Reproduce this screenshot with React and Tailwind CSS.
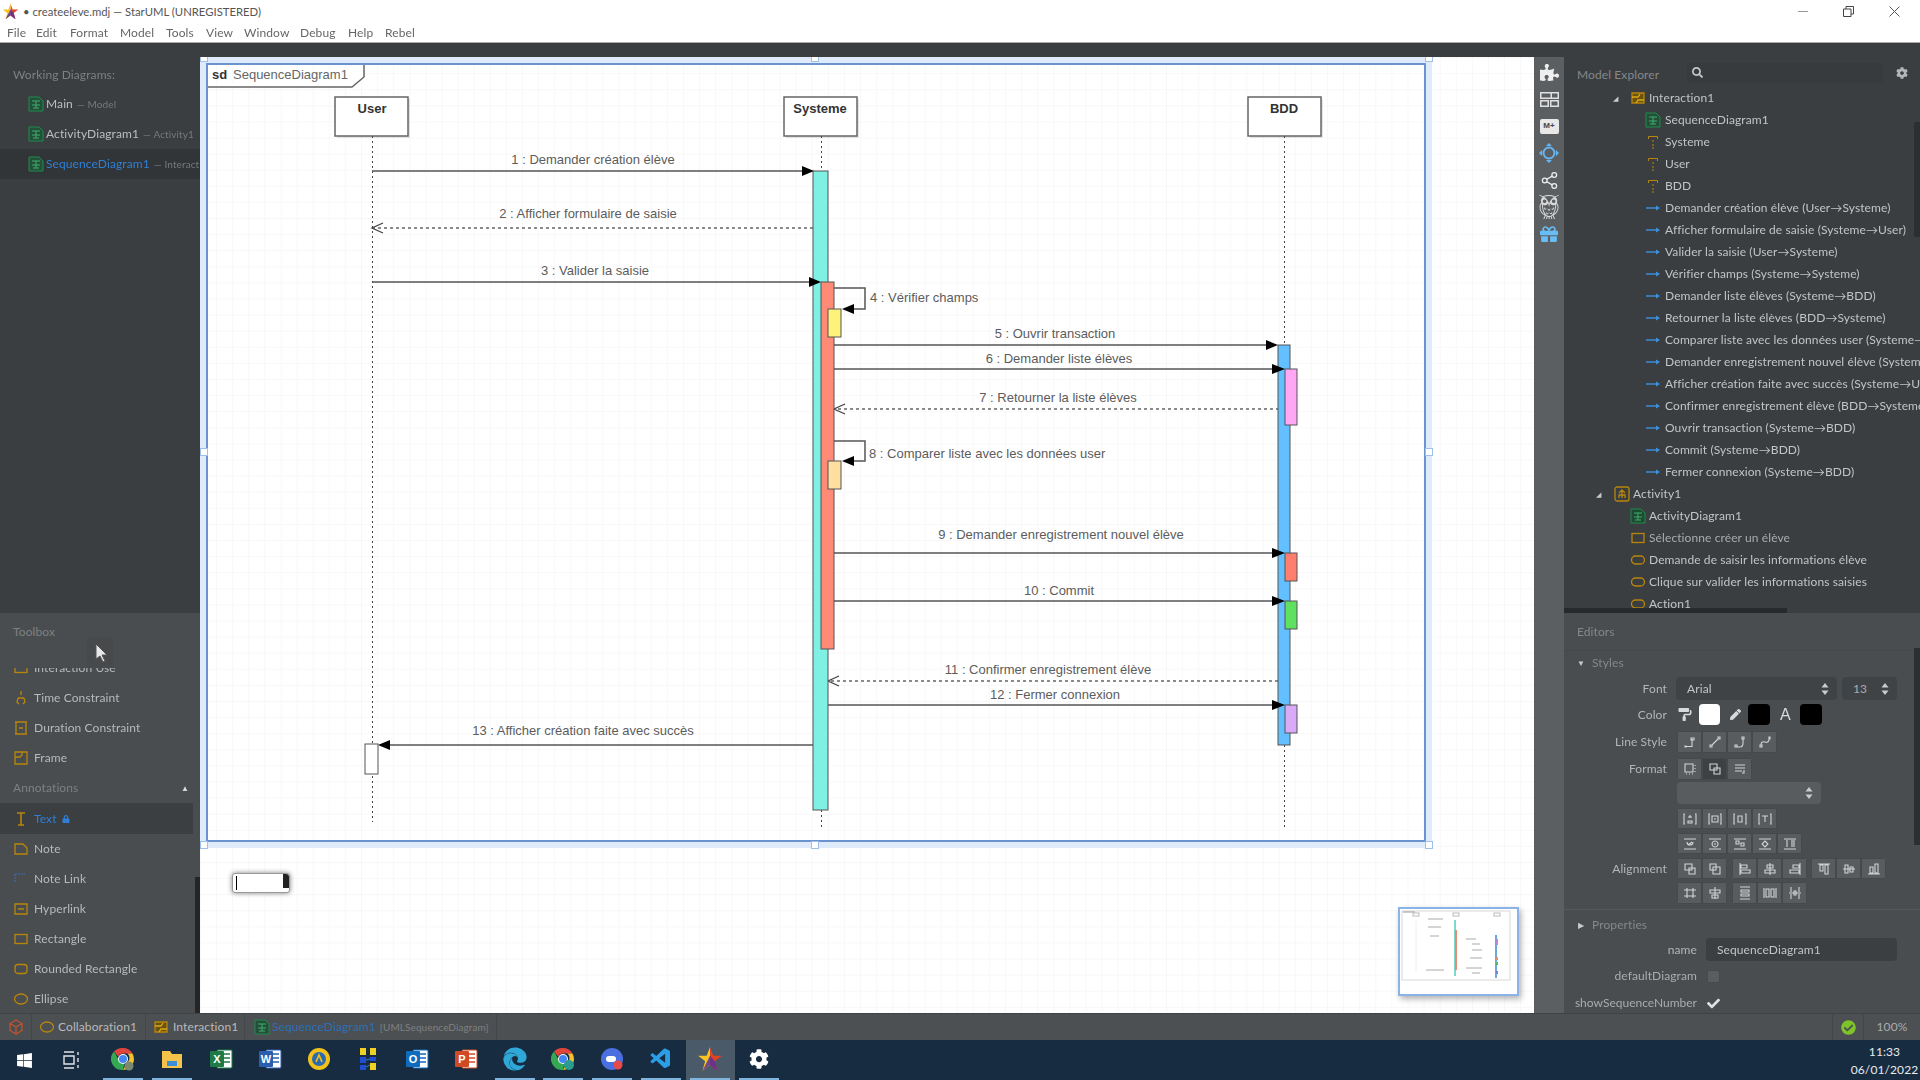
import React from "react";
import { FaWindows, FaCog, FaGift, FaPuzzlePiece, FaSearch, FaCheckCircle, FaPaintRoller, FaPen, FaLock, FaCheck, FaEdge } from "react-icons/fa";
import { GiOwl } from "react-icons/gi";
import { VscVscode } from "react-icons/vsc";
import { Share2 } from "lucide-react";

const MENU = [
  ["File", "w-[29px]"], ["Edit", "w-[34px]"], ["Format", "w-[50px]"], ["Model", "w-[46px]"], ["Tools", "w-[40px]"],
  ["View", "w-[38px]"], ["Window", "w-[56px]"], ["Debug", "w-[48px]"], ["Help", "w-[37px]"], ["Rebel", "w-[36px]"],
];

const MESSAGES = [
  "Demander création élève (User→Systeme)",
  "Afficher formulaire de saisie (Systeme→User)",
  "Valider la saisie (User→Systeme)",
  "Vérifier champs (Systeme→Systeme)",
  "Demander liste élèves (Systeme→BDD)",
  "Retourner la liste élèves (BDD→Systeme)",
  "Comparer liste avec les données user (Systeme→Systeme)",
  "Demander enregistrement nouvel élève (Systeme→BDD)",
  "Afficher création faite avec succès (Systeme→User)",
  "Confirmer enregistrement élève (BDD→Systeme)",
  "Ouvrir transaction (Systeme→BDD)",
  "Commit (Systeme→BDD)",
  "Fermer connexion (Systeme→BDD)",
];

const ORANGE = "#b8860b";

function DiagramIcon({ dim }) {
  return (
    <svg className="shrink-0" width="16" height="16" viewBox="0 0 16 16" fill="none">
      <path d="M1 1h10l4 4v10H1z" fill={dim ? "#1f4a32" : "#24503a"} stroke="#1f8a4c" />
      <path d="M4 5h8M8 5v7M4 9h8M5 12h6" stroke="#3fae6a" />
    </svg>
  );
}

function LifelineIcon() {
  return (
    <svg width="16" height="16" viewBox="0 0 16 16" fill="none" stroke={ORANGE}>
      <path d="M3.5 5V2.5h9V5" />
      <path d="M8 6v2M8 10v2M8 13v2" />
    </svg>
  );
}

function MessageIcon() {
  return (
    <svg width="16" height="16" viewBox="0 0 16 16">
      <path d="M1 8h11" stroke="#3b93e0" strokeWidth="1.4" />
      <path d="M11 5.5L15 8l-4 2.5z" fill="#3b93e0" />
    </svg>
  );
}

function ShapeIcon({ kind }) {
  return (
    <svg width="16" height="16" viewBox="0 0 16 16" fill="none" stroke={ORANGE} strokeWidth="1.3">
      {kind === "rect" && <rect x="2" y="3.5" width="12" height="9" />}
      {kind === "round" && <rect x="2" y="3.5" width="12" height="9" rx="3" />}
      {kind === "pill" && <rect x="1.5" y="4" width="13" height="8" rx="4" />}
      {kind === "ellipse" && <ellipse cx="8" cy="8" rx="6.5" ry="5" />}
      {kind === "interaction" && (
        <>
          <path d="M2 3h12v10H2z" fill="#6a5210" />
          <path d="M2 7h6l2-3M14 10H8l-2 3" stroke="#e0a818" />
        </>
      )}
      {kind === "activity" && (
        <>
          <rect x="1" y="1" width="14" height="14" rx="2" />
          <path d="M8 4v8M5 7l3-3 3 3M5 12V9h6v3" />
        </>
      )}
      {kind === "time" && <path d="M8 1v4M5 8l-1 4 2 2M11 8l1 4-2 2M5 8h6" />}
      {kind === "duration" && <path d="M2 2h12M2 14h12M3 2v12M13 2v12M6 8h4" />}
      {kind === "frame" && <path d="M2 2h12v12H2zM2 7h5l2-2V2" />}
      {kind === "note" && <path d="M2 3h8l4 4v6H2z" />}
      {kind === "hyper" && <path d="M2 3h12v10H2zM5 8h6" />}
      {kind === "T" && <path d="M4 2h8M8 2v12M5 14h6" strokeWidth="1.6" />}
    </svg>
  );
}

function Tree({ pad, tri, icon, children, dim, gap = "ml-[4px]" }) {
  return (
    <div className={"flex h-[22px] shrink-0 items-center whitespace-nowrap " + pad}>
      {tri && <span className={"text-[7px] leading-none text-[#c8cacc] " + tri}>◢</span>}
      <span className="flex w-[16px] shrink-0 justify-center">{icon}</span>
      <span className={gap + " " + (dim ? "text-[#a9acae]" : "text-[#c2c4c6]")}>{children}</span>
    </div>
  );
}

function ModelExplorer() {
  return (
    <div className="relative flex h-[570px] shrink-0 flex-col bg-[#3b3e40]">
      <div className="flex h-[44px] shrink-0 items-center pl-[13px] pt-[20px]">
        <span className="w-[110px] text-[#85888a]">Model Explorer</span>
        <div className="-mt-[5px] flex h-[20px] w-[196px] items-center rounded-[4px] bg-[#383b3d] pl-[5px]">
          <FaSearch className="text-[11px] text-[#c4c6c8]" />
        </div>
        <FaCog className="-mt-[5px] ml-[13px] text-[12px] text-[#b4b6b8]" />
      </div>
      <div className="flex flex-1 flex-col overflow-hidden pr-[5px]">
        <Tree pad="pl-[49px]" tri="w-[17px]" icon={<ShapeIcon kind="interaction" />} gap="ml-[3px]">Interaction1</Tree>
        <Tree pad="pl-[81px]" icon={<DiagramIcon />}>SequenceDiagram1</Tree>
        {["Systeme", "User", "BDD"].map((n) => (
          <Tree key={n} pad="pl-[81px]" icon={<LifelineIcon />}>{n}</Tree>
        ))}
        {MESSAGES.map((m) => (
          <Tree key={m} pad="pl-[81px]" icon={<MessageIcon />}>{m}</Tree>
        ))}
        <Tree pad="pl-[32px]" tri="w-[18px]" icon={<ShapeIcon kind="activity" />} gap="ml-[3px]">Activity1</Tree>
        <Tree pad="pl-[66px]" icon={<DiagramIcon dim />} gap="ml-[3px]">ActivityDiagram1</Tree>
        <Tree pad="pl-[66px]" icon={<ShapeIcon kind="rect" />} gap="ml-[3px]" dim>Sélectionne créer un élève</Tree>
        <Tree pad="pl-[66px]" icon={<ShapeIcon kind="pill" />} gap="ml-[3px]">Demande de saisir les informations élève</Tree>
        <Tree pad="pl-[66px]" icon={<ShapeIcon kind="pill" />} gap="ml-[3px]">Clique sur valider les informations saisies</Tree>
        <Tree pad="pl-[66px]" icon={<ShapeIcon kind="pill" />} gap="ml-[3px]">Action1</Tree>
      </div>
      <div className="absolute right-0 top-[79px] h-[115px] w-[6px] bg-[#2c2e30]" />
      <div className="absolute bottom-0 left-0 h-[5px] w-[223px] bg-[#28292b]" />
    </div>
  );
}

const GLYPHS = {
  lineA: "M2 12h1v-1h-1zM3 11.5h6V4M8 3h3v2H8z",
  lineB: "M2 12h2v-2H2zM4 10l6-6M10 2h2v2h-2z",
  lineC: "M2 12h2v-2H2zM4 12h3q3 0 3-4V4M9 2h2v2H9z",
  lineD: "M2 12h2v-2H2zM3 10q0-4 4-3t4-3M11 2h1v2h-1z",
  fmtA: "M2 2h8v8H2zM12 3v1M12 6v1M12 9v1M3 12h1M6 12h1M9 12h1",
  fmtC: "M2 3h10M2 6h10M2 9h7M11 8v3H9",
  boxA: "M2 2H1v10h1M12 2h1v10h-1M7 3v3M5 5h4M5 9h4v2H5z",
  boxB: "M2 2H1v10h1M12 2h1v10h-1M4 4h6v6H4zM6 7h2",
  boxC: "M2 2H1v10h1M12 2h1v10h-1M5 4h4v6H5z",
  boxD: "M2 2H1v10h1M12 2h1v10h-1M4 4h6M7 4v6",
  topA: "M1 2h12M1 12h12M4 5a3 3 0 1 0 6 0M5 8l4-3",
  topB: "M1 2h12M1 12h12M7 4a3 3 0 1 0 .1 0M7 6v2",
  topC: "M1 2h12M1 12h12M3 4h3v3H3zM8 6h3v3H8z",
  topD: "M1 2h12M1 12h12M7 4l3 3-3 3-3-3z",
  topE: "M1 2h12M1 12h12M4 3v7M9 3v7M11 3v7",
  frontA: "M2 2h7v6H2zM6 6h6v6H6z",
  backA: "M2 2h6v6H2zM5 5h7v7H5z",
  left: "M2 1v12M3 3h6v3H3zM3 8h9v3H3z",
  center: "M7 1v12M4 3h6v3H4zM2 8h10v3H2z",
  right: "M12 1v12M5 3h6v3H5zM2 8h9v3H2z",
  top: "M1 2h12M3 3v6h3V3zM8 3v9h3V3z",
  mid: "M1 7h12M3 3v8h3V3zM8 5v5h3V5z",
  bottom: "M1 12h12M3 5v6h3V5zM8 2v9h3V2z",
  spaceA: "M1 4h12M1 10h12M4 2v10M10 2v10",
  spaceB: "M7 1v12M2 4h10v3H2zM4 9h6v3H4z",
  evenA: "M2 1h10M2 13h10M3 4h8v2H3zM3 8h8v2H3z",
  evenB: "M1 2v10M13 2v10M3 3h3v8H3zM8 3h3v8H8z",
  evenC: "M3 1v5M11 1v5M1 7h12M3 8v5M11 8v5M6 5h2v4H6z",
};

function Btn({ g, dark }) {
  return (
    <div className={"flex h-full w-[25px] items-center justify-center border border-[#46494b] " + (dark ? "bg-[#3e4143]" : "bg-[#595c5e]")}>
      <svg width="14" height="14" viewBox="0 0 14 14" fill="none" stroke="#d2d4d5" strokeWidth="1.1">
        <path d={GLYPHS[g]} />
      </svg>
    </div>
  );
}

function Group({ items, className = "" }) {
  return (
    <div className={"flex h-full overflow-hidden rounded-[3px] " + className}>
      {items.map((g, i) => (
        <Btn key={i} g={g} />
      ))}
    </div>
  );
}

function Label({ children }) {
  return <span className="w-[103px] shrink-0 text-right text-[#b3b5b7]">{children}</span>;
}

function Spinner() {
  return (
    <svg width="8" height="12" viewBox="0 0 8 12" fill="#c9cbcc">
      <path d="M4 0l3.5 4.5h-7zM4 12L.5 7.5h7z" />
    </svg>
  );
}

function Editors() {
  return (
    <div className="relative flex min-h-0 flex-1 flex-col overflow-hidden bg-[#4a4d4f]">
      <div className="flex h-[38px] shrink-0 items-center border-b border-[#45484a] pl-[13px]">
        <span className="text-[#85888a]">Editors</span>
      </div>
      <div className="flex h-[24px] shrink-0 items-center pl-[13px]">
        <span className="w-[15px] text-[8px] text-[#c8cacc]">▼</span>
        <span className="text-[#85888a]">Styles</span>
      </div>
      <div className="mt-[2px] flex h-[23px] shrink-0 items-center">
        <Label>Font</Label>
        <div className="ml-[9px] flex h-full w-[161px] items-center justify-between rounded-[4px] bg-[#404345] pl-[11px] pr-[8px] text-[#c2c4c6]">
          Arial <Spinner />
        </div>
        <div className="ml-[5px] flex h-full w-[55px] items-center justify-between rounded-[4px] bg-[#404345] pl-[11px] pr-[8px] text-[#a9acae]">
          13 <Spinner />
        </div>
      </div>
      <div className="mt-[4px] flex h-[21px] shrink-0 items-center">
        <Label>Color</Label>
        <FaPaintRoller className="ml-[11px] w-[14px] text-[13px] text-[#d8d9da]" />
        <div className="ml-[7px] h-full w-[21px] rounded-[4px] bg-white" />
        <FaPen className="ml-[10px] w-[11px] text-[11px] text-[#d8d9da]" />
        <div className="ml-[7px] h-full w-[22px] rounded-[4px] bg-black" />
        <span className="ml-[10px] w-[13px] font-['Liberation_Sans',sans-serif] text-[16px] leading-none text-[#d8d9da]">A</span>
        <div className="ml-[7px] h-full w-[22px] rounded-[4px] bg-black" />
      </div>
      <div className="mt-[6px] flex h-[22px] shrink-0 items-center">
        <Label>Line Style</Label>
        <Group className="ml-[10px]" items={["lineA", "lineB", "lineC", "lineD"]} />
      </div>
      <div className="mt-[5px] flex h-[22px] shrink-0 items-center">
        <Label>Format</Label>
        <div className="ml-[10px] flex h-full overflow-hidden rounded-[3px]">
          <Btn g="fmtA" />
          <Btn g="frontA" dark />
          <Btn g="fmtC" />
        </div>
      </div>
      <div className="ml-[113px] mt-[2px] flex h-[22px] w-[144px] shrink-0 items-center justify-end rounded-[4px] bg-[#595c5e] pr-[8px]">
        <Spinner />
      </div>
      <div className="ml-[113px] mt-[4px] h-[21px] shrink-0">
        <Group items={["boxA", "boxB", "boxC", "boxD"]} />
      </div>
      <div className="ml-[113px] mt-[4px] h-[21px] shrink-0">
        <Group items={["topA", "topB", "topC", "topD", "topE"]} />
      </div>
      <div className="mt-[4px] flex h-[21px] shrink-0 items-center">
        <Label>Alignment</Label>
        <Group className="ml-[10px]" items={["frontA", "backA"]} />
        <Group className="ml-[5px]" items={["left", "center", "right"]} />
        <Group className="ml-[4px]" items={["top", "mid", "bottom"]} />
      </div>
      <div className="mt-[3px] flex h-[22px] shrink-0 items-center pl-[113px]">
        <Group items={["spaceA", "spaceB"]} />
        <Group className="ml-[5px]" items={["evenA", "evenB", "evenC"]} />
      </div>
      <div className="mt-[5px] h-0 shrink-0 border-t border-[#55585a]" />
      <div className="mt-[3px] flex h-[24px] shrink-0 items-center pl-[14px]">
        <span className="w-[14px] text-[8px] text-[#c8cacc]">▶</span>
        <span className="text-[#85888a]">Properties</span>
      </div>
      <div className="mt-[1px] flex h-[23px] shrink-0 items-center">
        <span className="w-[133px] text-right text-[#b3b5b7]">name</span>
        <div className="ml-[9px] flex h-full w-[191px] items-center rounded-[4px] bg-[#3c3f41] pl-[11px] text-[#c2c4c6]">SequenceDiagram1</div>
      </div>
      <div className="mt-[5px] flex h-[20px] shrink-0 items-center">
        <span className="w-[133px] text-right text-[#a9acae]">defaultDiagram</span>
        <div className="ml-[10px] h-[13px] w-[13px] rounded-[2px] border border-[#46494b] bg-[#5a5d5f]" />
      </div>
      <div className="mt-[7px] flex h-[20px] shrink-0 items-center">
        <span className="w-[133px] whitespace-nowrap text-right tracking-normal text-[#a9acae]">showSequenceNumber</span>
        <FaCheck className="ml-[10px] text-[13px] text-[#e0e1e2]" />
      </div>
      <div className="absolute right-0 top-[35px] h-[197px] w-[6px] bg-[#2c2e30]" />
    </div>
  );
}

function LeftPanel() {
  const tools = [
    ["Time Constraint", "time"], ["Duration Constraint", "duration"], ["Frame", "frame"],
  ];
  const notes = [
    ["Note", "note"], ["Note Link", null], ["Hyperlink", "hyper"], ["Rectangle", "rect"], ["Rounded Rectangle", "round"], ["Ellipse", "ellipse"],
  ];
  const Item = ({ label, kind }) => (
    <div className="flex h-[30.1px] shrink-0 items-center pl-[13px] text-[#b7b9bb]">
      <span className="w-[21px]">
        {kind ? (
          <ShapeIcon kind={kind} />
        ) : (
          <svg width="16" height="16" viewBox="0 0 16 16" fill="none" stroke="#3f6fb8"><path d="M2 3h10M2 3v9" strokeDasharray="2 1" /></svg>
        )}
      </span>
      {label}
    </div>
  );
  return (
    <div className="flex w-[200px] shrink-0 flex-col">
      <div className="flex h-[570px] shrink-0 flex-col bg-[#3b3e40]">
        <div className="flex h-[46px] shrink-0 items-center pl-[13px] pt-[18px] text-[#7d8082]">Working Diagrams:</div>
        {[
          ["Main", "— Model", 0],
          ["ActivityDiagram1", "— Activity1", 0],
          ["SequenceDiagram1", "— Interaction1", 1],
        ].map(([name, sub, sel]) => (
          <div key={name} className={"flex h-[30px] shrink-0 items-center overflow-hidden whitespace-nowrap pl-[28px] " + (sel ? "bg-[#323537]" : "")}>
            <DiagramIcon />
            <span className={"ml-[2px] shrink-0 " + (sel ? "text-[#2f7fd6]" : "text-[#bcbec0]")}>{name}</span>
            <span className="ml-[4px] shrink-0 text-[10px] text-[#76797b]">{sub}</span>
          </div>
        ))}
      </div>
      <div className="relative flex min-h-0 flex-1 flex-col bg-[#4a4d4f]">
        <div className="flex h-[55px] shrink-0 items-center border-b border-[#484b4d] pl-[13px] pb-[17px] text-[#7d8082]">Toolbox</div>
        <div className="flex min-h-0 flex-1 flex-col overflow-hidden">
          <div className="-mt-[15px]">
            <Item label="Interaction Use" kind="rect" />
            {tools.map(([l, k]) => <Item key={l} label={l} kind={k} />)}
            <div className="flex h-[30.1px] items-center justify-between pl-[13px] pr-[11px] text-[#7d8082]">
              Annotations <span className="text-[8px] text-[#d8d9da]">▲</span>
            </div>
            <div className="flex h-[30.1px] w-[193px] items-center bg-[#3c3f41] pl-[13px] text-[#2f7fd6]">
              <span className="w-[21px]"><ShapeIcon kind="T" /></span>
              Text <FaLock className="ml-[5px] text-[8px]" />
            </div>
            {notes.map(([l, k]) => <Item key={l} label={l} kind={k} />)}
          </div>
        </div>
        <div className="absolute bottom-0 right-0 h-[136px] w-[5px] bg-[#242527]" />
        <div className="absolute left-[87px] top-[24px] h-[30px] w-[26px] bg-[#47494b]">
          <svg width="26" height="30" viewBox="0 0 26 30">
            <path d="M9 7v15l4-3 3 6 2-1-3-6h5z" fill="#e8e8e8" stroke="#555" />
          </svg>
        </div>
      </div>
    </div>
  );
}

// sequence diagram drawing, coordinates are screen pixels (viewBox starts at canvas origin)
const BARS = [
  [813, 171, 15, 639, "#7ff0e4"], [821, 282, 13, 367, "#ff8a75"], [828, 309, 13, 28, "#fff27a"], [828, 461, 13, 28, "#ffdfa0"],
  [1278, 345, 12, 400, "#63bfff"], [1285, 369, 12, 56, "#ffa6f5"], [1285, 553, 12, 28, "#ff7f6e"], [1285, 601, 12, 28, "#5fe060"],
  [1285, 705, 12, 28, "#d8aaf8"], [365, 744, 13, 30, "#ffffff"],
];
const SOLID = [[372, 802, 171], [372, 809, 282], [834, 1266, 345], [834, 1272, 369], [834, 1272, 553], [834, 1272, 601], [828, 1272, 705]];
const DASHED = [[813, 372, 228], [1285, 834, 409], [1278, 828, 681]];
const LABELS = [
  ["1 : Demander création élève", 593, 164], ["2 : Afficher formulaire de saisie", 588, 218], ["3 : Valider la saisie", 595, 275],
  ["5 : Ouvrir transaction", 1055, 338], ["6 : Demander liste élèves", 1059, 362.5], ["7 : Retourner la liste élèves", 1058, 401.5],
  ["9 : Demander enregistrement nouvel élève", 1061, 538.5], ["10 : Commit", 1059, 594.5], ["11 : Confirmer enregistrement élève", 1048, 673.5],
  ["12 : Fermer connexion", 1055, 698.5], ["13 : Afficher création faite avec succès", 583, 734.5],
];
const HANDLES = [[204, 58], [815, 58], [1429, 58], [204, 452], [1429, 452], [204, 845], [815, 845], [1429, 845]];

function Diagram() {
  return (
    <svg className="absolute inset-0 tracking-normal" width="1334" height="956" viewBox="200 57 1334 956" fontFamily="'Liberation Sans', Arial, sans-serif" fontSize="13">
      <defs>
        <pattern id="grid" x="200" y="57" width="16.1" height="16.1" patternUnits="userSpaceOnUse">
          <path d="M16.1 0H0V16.1" fill="none" stroke="#f1f1f1" />
        </pattern>
      </defs>
      <rect x="200" y="57" width="1334" height="956" fill="#fff" />
      <rect x="200" y="57" width="1334" height="956" fill="url(#grid)" />
      <rect x="203.5" y="60.5" width="1225" height="784" fill="none" stroke="#dfeafa" strokeWidth="7" />
      <rect x="207" y="64" width="1218" height="777" fill="none" stroke="#6b93cf" strokeWidth="2" />
      {HANDLES.map(([x, y]) => (
        <rect key={x + "-" + y} x={x - 3.5} y={y - 3.5} width="7" height="7" fill="#fff" stroke="#9fc0ea" />
      ))}
      <path d="M208 87H352L364 77V65" fill="#fff" stroke="#666" strokeWidth="1.5" />
      <text x="212" y="79" fontWeight="700" fill="#333">sd</text>
      <text x="233" y="79" fill="#666">SequenceDiagram1</text>

      {[[335, "User", 372], [784, "Systeme", 820], [1248, "BDD", 1284]].map(([x, name, cx]) => (
        <g key={name}>
          <rect x={x + 2} y={99} width="73" height="39" fill="#000" opacity="0.1" />
          <rect x={x} y={97} width="73" height="39" fill="#fff" stroke="#666" strokeWidth="1.5" />
          <text x={cx} y={113} textAnchor="middle" fontWeight="700" fontSize="13" fill="#333">{name}</text>
        </g>
      ))}
      <g stroke="#444" strokeDasharray="2 3" fill="none">
        <path d="M372.5 136V822" />
        <path d="M821.5 136V171M821.5 810V830" />
        <path d="M1284.5 136V345M1284.5 745V830" />
      </g>

      {SOLID.map(([a, b, y]) => (
        <path key={a + "-" + y} d={`M${a} ${y}H${b}`} stroke="#555" strokeWidth="1.6" />
      ))}
      <path d="M834 288H865V309H848M834 441H865V461H848" fill="none" stroke="#555" strokeWidth="1.5" />
      <path d="M813 745H390" stroke="#555" strokeWidth="1.6" />
      {DASHED.map(([a, b, y]) => (
        <path key={y} d={`M${a} ${y}H${b}`} stroke="#666" strokeWidth="1.5" strokeDasharray="3 3" />
      ))}
      {DASHED.map(([, b, y]) => (
        <path key={y} d={`M${b + 11} ${y - 5}L${b} ${y}L${b + 11} ${y + 5}`} fill="none" stroke="#444" strokeWidth="1.3" />
      ))}

      {BARS.map(([x, y, w, h, c]) => (
        <rect key={x + "-" + y} x={x} y={y} width={w} height={h} fill={c} stroke="#555" strokeWidth="1" />
      ))}

      <g fill="#000">
        <path d="M802 166L814 171L802 176z" />
        <path d="M809 277L821 282L809 287z" />
        <path d="M1266 340L1278 345L1266 350z" />
        <path d="M1272 364L1285 369L1272 374z" />
        <path d="M1272 548L1285 553L1272 558z" />
        <path d="M1272 596L1285 601L1272 606z" />
        <path d="M1272 700L1285 705L1272 710z" />
        <path d="M854 304L842 309L854 314z" />
        <path d="M854 456L842 461L854 466z" />
        <path d="M390 740L378 745L390 750z" />
      </g>

      <g fill="#5c5c5c" textAnchor="middle">
        {LABELS.map(([t, x, y]) => (
          <text key={t} x={x} y={y}>{t}</text>
        ))}
      </g>
      <g fill="#5c5c5c">
        <text x="870" y="301.500">4 : Vérifier champs</text>
        <text x="869" y="458">8 : Comparer liste avec les données user</text>
      </g>
    </svg>
  );
}

function Minimap() {
  return (
    <div className="absolute left-[1198px] top-[850px] h-[89px] w-[121px] border-2 border-[#8ab4e8] bg-white shadow-[2px_3px_6px_rgba(0,0,0,0.3)]">
      <svg width="117" height="85" viewBox="0 0 117 85">
        <rect x="2" y="2" width="108" height="69" fill="none" stroke="#d8d8d8" />
        <path d="M3 3h12" stroke="#999" />
        <rect x="13" y="4" width="6" height="3" fill="#fff" stroke="#bbb" />
        <rect x="53" y="4" width="6" height="3" fill="#fff" stroke="#bbb" />
        <rect x="94" y="4" width="6" height="3" fill="#fff" stroke="#bbb" />
        <g stroke="#aaa">
          <path d="M28 10h15M28 18h13M30 27h9M66 30h10M72 35h8M72 41h10M66 59h16M72 64h8M70 49h12M26 61h18" strokeWidth="1" />
          <path d="M16 12v50" stroke="#eee" />
        </g>
        <rect x="54" y="11" width="2" height="56" fill="#7fd8cc" />
        <rect x="55" y="21" width="2" height="40" fill="#e88a75" />
        <rect x="95" y="26" width="2" height="43" fill="#6aa8e0" />
        <rect x="96" y="30" width="2" height="6" fill="#b08ad8" />
        <rect x="96" y="48" width="2" height="3" fill="#e88a75" />
        <rect x="96" y="53" width="2" height="3" fill="#50c060" />
        <rect x="96" y="62" width="2" height="3" fill="#8a7ad8" />
      </svg>
    </div>
  );
}

function ToolCell({ children }) {
  return <div className="flex h-[27px] w-full shrink-0 items-center justify-center">{children}</div>;
}

function SideTools() {
  return (
    <div className="flex w-[30px] shrink-0 flex-col items-center bg-[#5c5f61] pt-[1.5px] text-[#eeeeee]">
      <ToolCell><FaPuzzlePiece className="h-[19px] w-[19px]" /></ToolCell>
      <ToolCell>
        <svg width="19" height="15" viewBox="0 0 19 15" fill="#e0e0e0"><path d="M0 0h19v7H0zM0 8h9v7H0zM10 8h9v7h-9z" /><path d="M1.500 1.500h9v4h-9zM12 1.500h5.500v4H12zM1.500 9.500h6v4h-6zM11.500 9.500h6v4h-6z" fill="#5c5f61" /></svg>
      </ToolCell>
      <ToolCell>
        <div className="flex h-[15px] w-[19px] items-center justify-center rounded-[2px] bg-[#e8e8e8] font-['Liberation_Sans',sans-serif] text-[8px] font-bold leading-none text-[#444]">M+</div>
      </ToolCell>
      <ToolCell>
        <svg width="20" height="20" viewBox="0 0 20 20" fill="none" stroke="#67b5f0" strokeWidth="2"><circle cx="10" cy="10" r="5.500" /><path d="M10 0l3 3h-6zM10 20l3-3h-6zM0 10l3-3v6zM20 10l-3-3v6z" fill="#67b5f0" stroke="none" /></svg>
      </ToolCell>
      <ToolCell><Share2 size={19} strokeWidth={1.6} /></ToolCell>
      <ToolCell><GiOwl className="h-[26px] w-[26px] text-[#d8d8d8]" /></ToolCell>
      <ToolCell><FaGift className="h-[18px] w-[18px] text-[#69bdf5]" /></ToolCell>
    </div>
  );
}

function Chrome({ ring }) {
  return (
    <svg width="24" height="24" viewBox="0 0 24 24">
      <path d="M12 1a11 11 0 0 1 9.500 5.500H12a5.500 5.500 0 0 0-5 3L3 4.500A11 11 0 0 1 12 1z" fill="#e0443a" />
      <path d="M21.500 6.500A11 11 0 0 1 12 23l4.500-8a5.500 5.500 0 0 0 0-8.500z" fill="#f5c02e" />
      <path d="M3 4.500l4.500 8a5.500 5.500 0 0 0 6 4L12 23A11 11 0 0 1 3 4.500z" fill="#35a853" />
      <circle cx="12" cy="12" r="5" fill="#fff" />
      <circle cx="12" cy="12" r="4" fill="#4285f4" />
      {ring && <circle cx="18" cy="18" r="5" fill="#2a9d8f" />}
      {!ring && <circle cx="18" cy="19" r="4.500" fill="#7a8a70" />}
    </svg>
  );
}

function Sheet({ bg, letter }) {
  return (
    <svg width="24" height="24" viewBox="0 0 24 24">
      <rect x="8" y="3" width="15" height="18" rx="1" fill="#fff" stroke={bg} />
      <path d="M14 7h7M14 11h7M14 15h7" stroke={bg} strokeWidth="1.5" />
      <rect x="1" y="4" width="14" height="16" rx="1" fill={bg} />
      <text x="8" y="16" textAnchor="middle" fontSize="11" fontWeight="700" fill="#fff" fontFamily="'Liberation Sans', sans-serif">{letter}</text>
    </svg>
  );
}

function Star({ size }) {
  return (
    <svg width={size} height={size} viewBox="0 0 24 24">
      <path d="M12 1l3 8h8l-6.500 5 2.500 9-7-5.500z" fill="#e0451f" />
      <path d="M12 1L9 9H1l6.500 5L5 23l7-5.500z" fill="#f7c51e" />
      <path d="M12 9l4.500 5 2.500 9-7-5.500L5 23z" fill="#5a2f9e" opacity="0.85" />
    </svg>
  );
}

const ICONS = [
  [<Chrome key="c" />, true],
  [
    <svg key="f" width="24" height="24" viewBox="0 0 24 24">
      <path d="M2 4h8l2 3h10v14H2z" fill="#f5c24a" />
      <path d="M7 14h10v5H7z" fill="#3b8ed8" />
    </svg>,
    true,
  ],
  [<Sheet key="x" bg="#1f7a45" letter="X" />, false],
  [<Sheet key="w" bg="#2a5fb0" letter="W" />, false],
  [
    <svg key="n" width="24" height="24" viewBox="0 0 24 24">
      <circle cx="12" cy="12" r="11" fill="#f2c21a" />
      <circle cx="12" cy="12" r="7" fill="#2c6ab0" />
      <path d="M9 15l3-7 3 7" stroke="#f2c21a" strokeWidth="1.6" fill="none" />
    </svg>,
    false,
  ],
  [
    <svg key="g" width="24" height="24" viewBox="0 0 24 24">
      <path d="M4 1h6v7H4zM14 1h6v7h-6zM14 16h6v7h-6z" fill="#f0d020" />
      <path d="M4 10h6v6H4zM4 18h6v5H4zM14 10h6v4h-6z" fill="#1f4fd0" />
      <path d="M10 13l4-1M10 20l4-2" stroke="#2a80d0" />
    </svg>,
    false,
  ],
  [<Sheet key="o" bg="#0f6cbd" letter="O" />, false],
  [<Sheet key="p" bg="#d04a25" letter="P" />, false],
  [<FaEdge key="e" className="h-[24px] w-[24px] text-[#2fa8d8]" />, true],
  [<Chrome key="c2" ring />, true],
  [
    <svg key="d" width="24" height="24" viewBox="0 0 24 24">
      <circle cx="12" cy="12" r="11" fill="#4a6fe0" />
      <rect x="6" y="9" width="10" height="6" rx="3" fill="#fff" />
      <circle cx="18" cy="18" r="4.500" fill="#e84a4a" />
    </svg>,
    true,
  ],
  [<VscVscode key="v" className="h-[24px] w-[24px] text-[#2a9fe8]" />, true],
  [<Star key="s" size={26} />, true, true],
  [<FaCog key="g2" className="h-[20px] w-[20px] text-white" />, true],
];

function Taskbar() {
  return (
    <div className="flex h-[40px] shrink-0 items-stretch bg-[#182c41] text-white">
      <div className="flex w-[48px] items-center justify-center">
        <FaWindows className="h-[17px] w-[17px]" />
      </div>
      <div className="mr-[3px] flex w-[48px] items-center justify-center">
        <svg width="18" height="18" viewBox="0 0 18 18" fill="none" stroke="#dfe3e6" strokeWidth="1.4">
          <path d="M1 1h10M1 17h10M1 5h10v8H1zM15 1v3M15 7v4M15 14v3" />
        </svg>
      </div>
      {ICONS.map(([icon, running, active], i) => (
        <div key={i} className={"flex w-[48.9px] justify-center " + (active ? "bg-[#4a5a68]" : "")}>
          <div className={"flex h-full w-[40px] items-center justify-center border-b-2 " + (running ? "border-[#7fb4de]" : "border-transparent")}>
            {icon}
          </div>
        </div>
      ))}
      <div className="ml-auto flex w-[64px] flex-col items-center justify-center gap-[3px] pr-[7px] text-[12px] leading-[15px] text-[#e8ebee]">
        <span>11:33</span>
        <span className="whitespace-nowrap">06/01/2022</span>
      </div>
    </div>
  );
}

function StatusBar() {
  return (
    <div className="flex h-[27px] shrink-0 items-center border-t border-[#404345] bg-[#4d5052] text-[#b7b9bb]">
      <div className="flex h-full w-[32px] items-center justify-center border-r border-[#44474a]">
        <svg width="16" height="16" viewBox="0 0 16 16" fill="none" stroke="#c0532f" strokeWidth="1.3"><path d="M8 1l6 3.500v7L8 15l-6-3.500v-7zM2 4.500L8 8l6-3.500M8 8v7" /></svg>
      </div>
      <div className="flex h-full w-[114px] items-center border-r border-[#44474a] pl-[7px]">
        <span className="w-[19px]"><ShapeIcon kind="ellipse" /></span>Collaboration1
      </div>
      <div className="flex h-full w-[99px] items-center border-r border-[#44474a] pl-[7px]">
        <span className="w-[20px]"><ShapeIcon kind="interaction" /></span>Interaction1
      </div>
      <div className="flex h-full w-[252px] items-center overflow-hidden whitespace-nowrap border-r border-[#44474a] pl-[9px]">
        <span className="w-[18px]"><DiagramIcon /></span>
        <span className="text-[#2a6fb8]">SequenceDiagram1</span>
        <span className="ml-[4px] text-[10px] text-[#7d8082]">[UMLSequenceDiagram]</span>
      </div>
      <div className="ml-auto flex h-full w-[32px] items-center justify-center border-x border-[#44474a]">
        <FaCheckCircle className="text-[15px] text-[#7ec32a]" />
      </div>
      <div className="flex w-[56px] justify-center text-[#a9acae]">100%</div>
    </div>
  );
}

export default function App() {
  return (
    <div className="flex h-[1080px] w-[1920px] flex-col overflow-hidden font-['Lato','Noto_Sans',sans-serif] text-[12px] leading-none tracking-[0.1px] blur-[0.7px]">
      <div className="flex h-[43px] shrink-0 flex-col border-b border-[#aaaaaa] bg-white">
        <div className="flex h-[23px] shrink-0 items-center pl-[2px]">
          <Star size={17} />
          <span className="ml-[4px] text-[11.3px] tracking-normal text-[#555]">• createeleve.mdj — StarUML (UNREGISTERED)</span>
          <div className="ml-auto flex items-center text-[#666]">
            <div className="mr-[35px] h-[1px] w-[10px] bg-[#999]" />
            <svg className="mr-[35px]" width="11" height="11" viewBox="0 0 11 11" fill="none" stroke="#444"><path d="M.5 3h7.500v7.500H.5zM3 3V.5h7.500V8H8" /></svg>
            <svg className="mr-[20px]" width="11" height="11" viewBox="0 0 11 11" fill="none" stroke="#555"><path d="M.5.5l10 10M10.500.5l-10 10" /></svg>
          </div>
        </div>
        <div className="flex h-[19px] items-center pl-[7px] text-[12px] text-[#666]">
          {MENU.map(([m, w]) => (
            <span key={m} className={w}>{m}</span>
          ))}
        </div>
      </div>
      <div className="flex min-h-0 flex-1">
        <LeftPanel />
        <div className="flex w-[1364px] shrink-0 flex-col bg-[#3b3e40]">
          <div className="h-[14px] shrink-0" />
          <div className="flex min-h-0 flex-1">
            <div className="relative flex-1 overflow-hidden bg-white">
              <Diagram />
              <div className="absolute left-[32px] top-[816px] h-[20px] w-[58px] rounded-[3px] border border-[#999] bg-white shadow-[0_0_5px_rgba(0,0,0,0.5)]">
                <div className="ml-[3px] mt-[2px] h-[14px] w-[1px] bg-black" />
                <div className="absolute right-0 top-0 h-[14px] w-[6px] rounded-tr-[3px] bg-[#222]" />
              </div>
              <Minimap />
            </div>
            <SideTools />
          </div>
        </div>
        <div className="flex min-w-0 flex-1 flex-col">
          <ModelExplorer />
          <Editors />
        </div>
      </div>
      <StatusBar />
      <Taskbar />
    </div>
  );
}
